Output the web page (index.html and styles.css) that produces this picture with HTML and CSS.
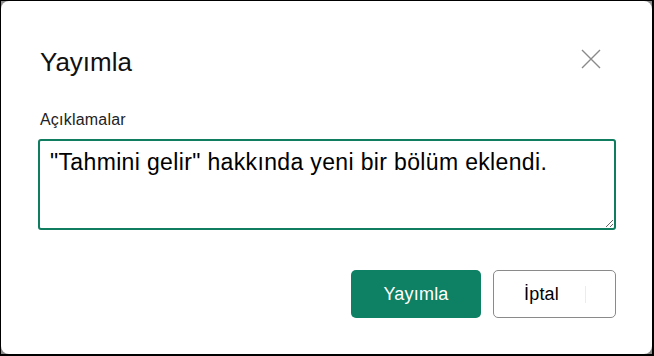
FILE: index.html
```html
<!DOCTYPE html>
<html lang="tr">
<head>
  <meta charset="UTF-8" />
  <meta name="viewport" content="width=device-width, initial-scale=1.0"/>
  <title>Yayımla</title>
  <link rel="stylesheet" href="styles.css">
</head>
<body>
  <div class="frame">
    <div class="dialog" role="dialog" aria-labelledby="dialog-title">
      <div class="dialog-header">
        <h2 id="dialog-title">Yayımla</h2>
        <button class="close" aria-label="Kapat">
          <svg width="20" height="20" viewBox="0 0 20 20">
            <path d="M1 1 L19 19 M19 1 L1 19" stroke="#8a8a8a" stroke-width="1.4" fill="none"/>
          </svg>
        </button>
      </div>

      <label class="label" for="notes">Açıklamalar</label>
      <textarea class="notes" id="notes">"Tahmini gelir" hakkında yeni bir bölüm eklendi.</textarea>

      <div class="actions">
        <button class="btn primary">Yayımla</button>
        <button class="btn secondary"><span>İptal</span><span class="divider"></span></button>
      </div>
    </div>
  </div>
</body>
</html>
```

FILE: styles.css
```css
* {
  box-sizing: border-box;
}

html, body {
  height: 100%;
}

body {
  margin: 0;
  background: black;
  padding: 1px 2px 2px 1px;
  font-family: "Liberation Sans", Arial, sans-serif;
  color: #1a1a1a;
}

.frame {
  height: 100%;
  background: #8c8c8c;
}

.dialog {
  height: 100%;
  background: white;
  border-radius: 8px;
  padding: 45px 36px 0 39px;
  display: flex;
  flex-direction: column;
}

.dialog-header {
  display: flex;
  justify-content: space-between;
  align-items: flex-start;
}

h2 {
  margin: 0;
  font-size: 26px;
  font-weight: normal;
  line-height: 32px;
  color: #111;
}

.close {
  width: 32px;
  height: 32px;
  margin: -3px 9px 0 0;
  padding: 0;
  border: none;
  background: none;
  display: flex;
  align-items: center;
  justify-content: center;
  cursor: pointer;
}

.label {
  margin-top: 32px;
  font-size: 16px;
  letter-spacing: 0.2px;
  line-height: 20px;
  color: #222;
}

.notes {
  margin: 9px 0 0 -2px;
  height: 91px;
  width: calc(100% + 2px);
  border: 2px solid #107c60;
  border-radius: 3px;
  padding: 8px 10px;
  font-family: inherit;
  font-size: 23px;
  letter-spacing: 0.35px;
  line-height: 26px;
  color: #000;
  resize: both;
  outline: none;
}

.actions {
  margin-top: 40px;
  display: flex;
  justify-content: flex-end;
  gap: 12px;
}

.btn {
  height: 48px;
  border-radius: 5px;
  font-family: inherit;
  font-size: 18px;
  letter-spacing: 0.2px;
  cursor: pointer;
}

.btn.primary {
  width: 130px;
  background: #0e8064;
  border: none;
  color: white;
}

.btn.secondary {
  width: 123px;
  background: white;
  border: 1px solid #8a8a8a;
  color: #000;
  display: flex;
  align-items: center;
  padding: 0 0 0 30px;
}

.divider {
  width: 1px;
  height: 17px;
  margin-left: 26px;
  background: #ececec;
}
```
